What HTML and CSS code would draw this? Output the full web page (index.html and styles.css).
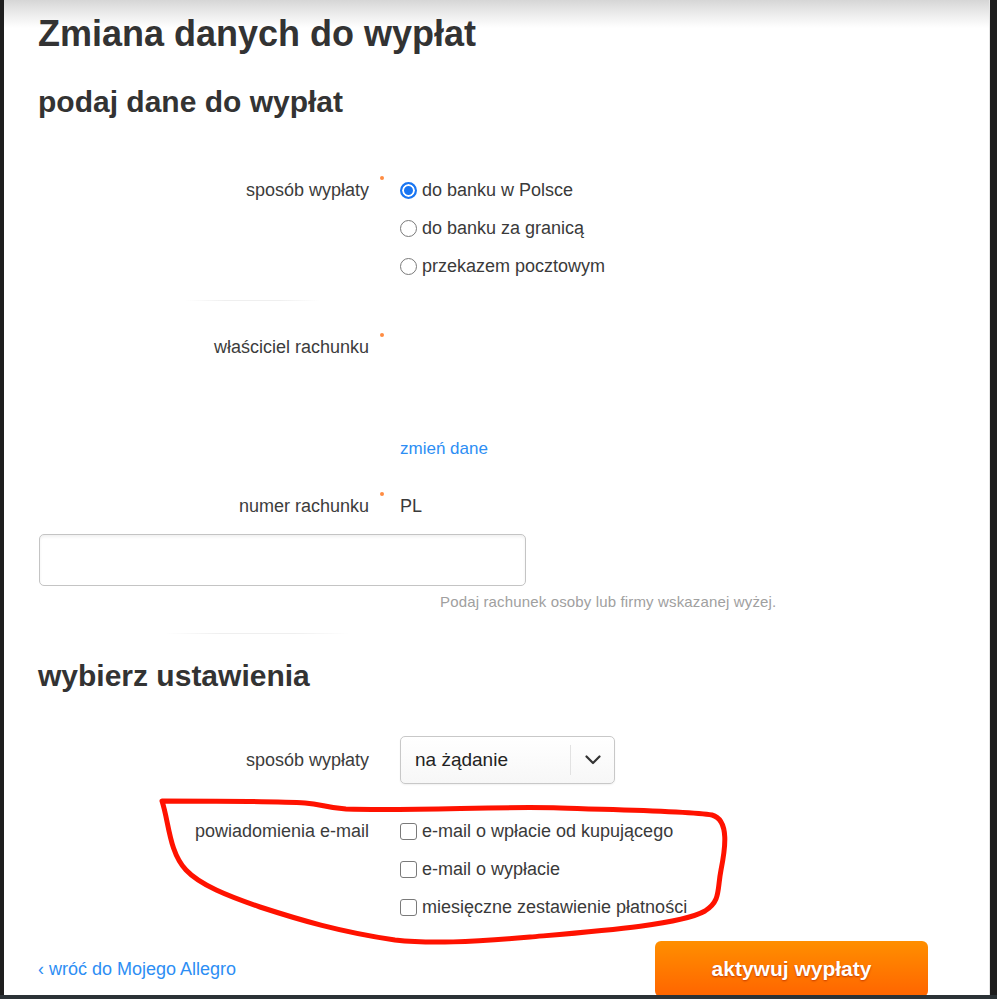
FILE: index.html
```html
<!DOCTYPE html>
<html lang="pl">
<head>
<meta charset="utf-8">
<title>Zmiana danych do wypłat</title>
<link rel="stylesheet" href="styles.css">
</head>
<body>
<div class="panel">
  <h1 class="title">Zmiana danych do wypłat</h1>
  <h2 class="section-title first">podaj dane do wypłat</h2>

  <div class="form-row row-method">
    <div class="label">sposób wypłaty</div>
    <div class="req"><span class="dot"></span></div>
    <div class="control">
      <label class="option"><span class="radio checked"></span>do banku w Polsce</label>
      <label class="option"><span class="radio"></span>do banku za granicą</label>
      <label class="option"><span class="radio"></span>przekazem pocztowym</label>
    </div>
  </div>

  <div class="sep sep-1"></div>

  <div class="form-row row-owner">
    <div class="label">właściciel rachunku</div>
    <div class="req"><span class="dot"></span></div>
    <div class="control">
      <div class="owner-data"></div>
      <a class="link change-link" href="#">zmień dane</a>
    </div>
  </div>

  <div class="form-row row-account">
    <div class="label">numer rachunku</div>
    <div class="req"><span class="dot"></span></div>
    <div class="control">PL</div>
  </div>

  <div class="account-input"></div>
  <p class="hint">Podaj rachunek osoby lub firmy wskazanej wyżej.</p>

  <div class="sep sep-2"></div>

  <h2 class="section-title second">wybierz ustawienia</h2>

  <div class="form-row row-select">
    <div class="label">sposób wypłaty</div>
    <div class="req"></div>
    <div class="control">
      <div class="select">
        <span class="select-value">na żądanie</span>
        <span class="select-arrow">
          <svg width="16" height="10" viewBox="0 0 16 10"><path d="M1.5 1.5 L8 8 L14.5 1.5" fill="none" stroke="#333" stroke-width="2.2" stroke-linecap="round" stroke-linejoin="round"/></svg>
        </span>
      </div>
    </div>
  </div>

  <div class="form-row row-notify">
    <div class="label">powiadomienia e-mail</div>
    <div class="req"></div>
    <div class="control">
      <label class="option"><span class="checkbox"></span>e-mail o wpłacie od kupującego</label>
      <label class="option"><span class="checkbox"></span>e-mail o wypłacie</label>
      <label class="option"><span class="checkbox"></span>miesięczne zestawienie płatności</label>
    </div>
  </div>

  <div class="footer">
    <a class="link back-link" href="#">‹ wróć do Mojego Allegro</a>
    <button class="submit" type="button">aktywuj wypłaty</button>
  </div>
</div>
<div class="bottom-bar"></div>

<svg class="annotation" width="997" height="999" viewBox="0 0 997 999">
  <path d="M162 801 C200 801 280 801 305 803 C322 804 326 808 346 809 C420 811 500 806 560 808 C620 810 690 811 712 815 C730 820 725 850 721 870 C717 890 721 901 705 911 C680 925 600 931 530 937 C470 942 430 944 395 940 C340 932 300 920 260 907 C228 896 200 885 186 870 C169 852 169 822 162 801 Z" fill="none" stroke="#ff1200" stroke-width="5" stroke-linejoin="round" stroke-linecap="round"/>
</svg>
</body>
</html>
```

FILE: styles.css
```css
html, body {
  margin: 0;
  padding: 0;
}

body {
  background: #1e1e1e;
  font-family: "Liberation Sans", Arial, sans-serif;
  color: #3a3a3a;
  position: relative;
  width: 997px;
  height: 999px;
  overflow: hidden;
}

.panel {
  box-sizing: border-box;
  margin-left: 4px;
  width: 986px;
  height: 995px;
  padding-left: 34px;
  background-color: #fff;
  background-image: linear-gradient(#d6d6d6, #ececec 14px, #ffffff 28px);
  background-repeat: no-repeat;
  background-size: 100% 28px;
  border-right: 1px solid #e6e6e6;
  overflow: hidden;
}

.bottom-bar {
  height: 4px;
  background: #2b3236;
}

.title {
  margin: 13px 0 0;
  font-size: 36px;
  line-height: 42px;
  font-weight: bold;
  color: #333;
}

.section-title {
  margin: 0;
  font-size: 30px;
  line-height: 36px;
  font-weight: bold;
  color: #333;
}

.section-title.first {
  margin-top: 29px;
}

.section-title.second {
  margin-top: 24px;
}

.form-row {
  display: grid;
  grid-template-columns: 331px 31px 1fr;
  font-size: 18px;
  line-height: 38px;
}

.label {
  text-align: right;
  color: #3c3c3c;
}

.req {
  position: relative;
}

.dot {
  display: block;
  width: 4px;
  height: 4px;
  margin: 5px 0 0 11px;
  border-radius: 50%;
  background: #ff8c42;
}

.control {
  color: #3a3a3a;
}

.option {
  display: flex;
  align-items: center;
  height: 38px;
}

.radio {
  box-sizing: border-box;
  width: 17px;
  height: 17px;
  margin-right: 5px;
  border-radius: 50%;
  border: 1px solid #7a7a7a;
  background: #fff;
}

.radio.checked {
  border: 2px solid #1a76f2;
  background: #1a76f2;
  box-shadow: inset 0 0 0 2px #fff;
}

.checkbox {
  box-sizing: border-box;
  width: 17px;
  height: 17px;
  margin-right: 5px;
  border-radius: 3px;
  border: 1px solid #7a7a7a;
  background: #fff;
}

.row-method {
  margin-top: 51px;
}

.sep {
  height: 1px;
  background: linear-gradient(to right, rgba(235,235,235,0), #efefef 30%, #efefef 70%, rgba(235,235,235,0));
}

.sep-1 {
  margin: 15px 0 0 147px;
  width: 135px;
}

.sep-2 {
  margin: 22px 0 0 127px;
  width: 185px;
}

.row-owner {
  margin-top: 27px;
}

.owner-data {
  height: 110px;
}

.link {
  color: #2d8ef4;
  text-decoration: none;
  font-size: 17px;
  line-height: 22px;
}

.change-link {
  display: block;
}

.row-account {
  margin-top: 27px;
}

.account-input {
  box-sizing: border-box;
  margin: 9px 0 0 1px;
  width: 487px;
  height: 52px;
  border: 1px solid #c4c4c4;
  border-radius: 5px;
  background: #fff;
  box-shadow: inset 0 2px 3px rgba(0,0,0,0.06);
}

.hint {
  margin: 7px 0 0 402px;
  font-size: 15px;
  line-height: 18px;
  letter-spacing: 0.15px;
  color: #a0a0a0;
}

.row-select {
  margin-top: 42px;
  line-height: 48px;
}

.select {
  box-sizing: border-box;
  display: flex;
  align-items: stretch;
  width: 215px;
  height: 48px;
  border: 1px solid #c8c8c8;
  border-radius: 5px;
  background: linear-gradient(#ffffff, #f7f7f7);
  box-shadow: 0 1px 2px rgba(0,0,0,0.06);
}

.select-value {
  flex: 1;
  padding-left: 14px;
  font-size: 19px;
  line-height: 46px;
  color: #222;
}

.select-arrow {
  width: 43px;
  display: flex;
  align-items: center;
  justify-content: center;
  margin: 8px 0;
  border-left: 1px solid #e2e2e2;
}

.select-arrow svg {
  display: block;
}

.row-notify {
  margin-top: 28px;
}

.footer {
  margin-top: 15px;
  padding-right: 61px;
  display: flex;
  justify-content: space-between;
  align-items: center;
}

.back-link {
  font-size: 18px;
  line-height: 22px;
}

.submit {
  width: 273px;
  height: 56px;
  border: none;
  border-radius: 6px;
  background: linear-gradient(#ff8f00, #ff6400);
  color: #fff;
  font-family: "Liberation Sans", Arial, sans-serif;
  font-size: 21px;
  font-weight: bold;
  text-shadow: 0 1px 2px #c13a00;
  padding: 0;
}

.annotation {
  position: absolute;
  left: 0;
  top: 0;
  pointer-events: none;
}

.annotation path {
  filter: blur(0.4px);
}
```
